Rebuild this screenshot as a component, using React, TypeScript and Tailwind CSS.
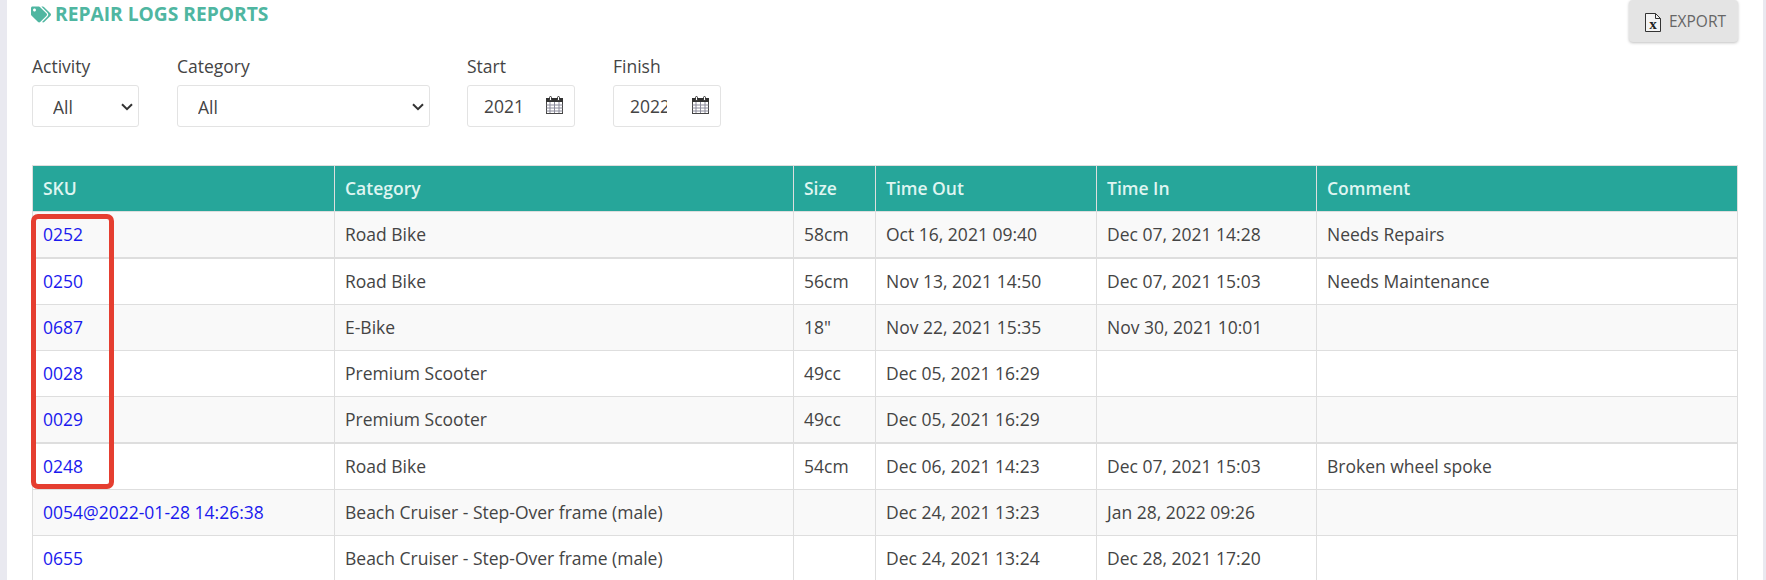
import { FaTags } from 'react-icons/fa';

const ROWS = [
  { sku: '0252', category: 'Road Bike', size: '58cm', out: 'Oct 16, 2021 09:40', in: 'Dec 07, 2021 14:28', comment: 'Needs Repairs', thick: true },
  { sku: '0250', category: 'Road Bike', size: '56cm', out: 'Nov 13, 2021 14:50', in: 'Dec 07, 2021 15:03', comment: 'Needs Maintenance', tall: true },
  { sku: '0687', category: 'E-Bike', size: '18"', out: 'Nov 22, 2021 15:35', in: 'Nov 30, 2021 10:01', comment: '' },
  { sku: '0028', category: 'Premium Scooter', size: '49cc', out: 'Dec 05, 2021 16:29', in: '', comment: '' },
  { sku: '0029', category: 'Premium Scooter', size: '49cc', out: 'Dec 05, 2021 16:29', in: '', comment: '', thick: true },
  { sku: '0248', category: 'Road Bike', size: '54cm', out: 'Dec 06, 2021 14:23', in: 'Dec 07, 2021 15:03', comment: 'Broken wheel spoke', tall: true },
  { sku: '0054@2022-01-28 14:26:38', category: 'Beach Cruiser - Step-Over frame (male)', size: '', out: 'Dec 24, 2021 13:23', in: 'Jan 28, 2022 09:26', comment: '' },
  { sku: '0655', category: 'Beach Cruiser - Step-Over frame (male)', size: '', out: 'Dec 24, 2021 13:24', in: 'Dec 28, 2021 17:20', comment: '' },
];

const HEADERS = ['SKU', 'Category', 'Size', 'Time Out', 'Time In', 'Comment'];

function CalendarIcon() {
  return (
    <svg width="17" height="18" viewBox="0 0 17 18" className="shrink-0">
      <rect x="0.5" y="2.5" width="16" height="15" fill="#fff" stroke="#444" />
      <rect x="0" y="2" width="17" height="4" fill="#333" />
      <path d="M0.5 9h16M0.5 12h16M0.5 15h16M4 6v11M8.5 6v11M13 6v11" stroke="#8a8a9a" strokeWidth="1" fill="none" />
      <rect x="3.5" y="0.5" width="2" height="4" rx="1" fill="#fff" stroke="#333" />
      <rect x="11.5" y="0.5" width="2" height="4" rx="1" fill="#fff" stroke="#333" />
    </svg>
  );
}

function ExcelIcon() {
  return (
    <svg width="16" height="19" viewBox="0 0 16 19" className="shrink-0">
      <path d="M0.5 0.5H10.5L15.5 5.5V18.5H0.5Z" fill="#f4f4f4" stroke="#333" />
      <path d="M10.5 0.5V5.5H15.5" fill="none" stroke="#333" />
      <text x="8" y="16" textAnchor="middle" fontSize="15" fontWeight="700" fontFamily="'Liberation Serif', serif" fill="#222">x</text>
    </svg>
  );
}

function DateField({ label, value, className }: { label: string; value: string; className: string }) {
  return (
    <div className={className}>
      <label className="block text-[17.5px] leading-[22px] text-[#444]">{label}</label>
      <div className="mt-2 flex h-[42px] w-[108px] items-center rounded-[3px] border border-[#e3e3e3] bg-white pl-[16px] pr-[11px]">
        <input
          readOnly
          value={value}
          className="w-[37px] bg-transparent text-[17.5px] text-[#444] outline-none"
        />
        <span className="ml-auto -mt-[3px]">
          <CalendarIcon />
        </span>
      </div>
    </div>
  );
}

function SelectField({ label, width, className }: { label: string; width: string; className: string }) {
  return (
    <div className={className}>
      <label className="block text-[17.5px] leading-[22px] text-[#444]">{label}</label>
      <div className={`relative mt-2 ${width}`}>
        <select className="block h-[42px] w-full appearance-none rounded-[3px] border border-[#e3e3e3] bg-white pt-[3px] pl-[20px] text-[17.5px] text-[#444] outline-none">
          <option>All</option>
        </select>
        {/* chevron */}
        <svg width="12" height="8" viewBox="0 0 12 8" className="pointer-events-none absolute right-[6px] top-[18px]">
          <path d="M1 1.2L6 6.2L11 1.2" fill="none" stroke="#333" strokeWidth="2" />
        </svg>
      </div>
    </div>
  );
}

export default function App() {
  return (
    <div className="relative h-[580px] overflow-hidden bg-white font-['Open_Sans',sans-serif] text-[#444]">
      <div className="flex h-full">
        <div className="w-[7px] shrink-0 bg-[#e9e9f0]" />

        <div className="min-w-0 flex-1 pl-[25px] pr-[26px]">
          {/* Heading + export */}
          <div className="flex h-[42px] items-start justify-between">
            <h2 className="-ml-px flex items-center gap-[4px] text-[19.2px] leading-[28px] font-bold uppercase text-[#4fb6a1]">
              <FaTags className="h-[17px] w-[20px]" />
              Repair Logs Reports
            </h2>
            <button className="-mr-px flex h-[42px] w-[109px] items-center justify-center gap-[8px] rounded-[4px] bg-[#e4e4e4] pt-[2px] pl-[4px] text-[15.5px] text-[#666] shadow-[0_1px_3px_rgba(0,0,0,0.25)]">
              <ExcelIcon />
              EXPORT
            </button>
          </div>

          {/* Filters */}
          <div className="mt-[13px] flex">
            <SelectField label="Activity" width="w-[107px]" className="mr-[38px]" />
            <SelectField label="Category" width="w-[253px]" className="mr-[37px]" />
            <DateField label="Start" value="2021-10-16" className="mr-[38px]" />
            <DateField label="Finish" value="2022-01-28" className="" />
          </div>

          {/* Table */}
          <table className="mt-[38px] w-[1705px] table-fixed border-collapse text-[17.5px]">
            <colgroup>
              <col className="w-[302px]" />
              <col className="w-[459px]" />
              <col className="w-[82px]" />
              <col className="w-[221px]" />
              <col className="w-[220px]" />
              <col className="w-[421px]" />
            </colgroup>
            <thead>
              <tr className="h-[46px] bg-[#26a69a]">
                {HEADERS.map((h) => (
                  <th key={h} className="border border-[#dedede] px-[10px] text-left font-semibold text-[#dff5f1]">
                    {h}
                  </th>
                ))}
              </tr>
            </thead>
            <tbody>
              {ROWS.map((row, i) => (
                <tr
                  key={row.sku}
                  className={`${row.tall ? 'h-[47px]' : 'h-[46px]'} ${i % 2 === 0 ? 'bg-[#f9f9f9]' : 'bg-white'}`}
                >
                  <td className={`border border-[#dedede] px-[10px] ${row.thick ? 'border-b-2' : ''}`}>
                    <a className="text-[#1a1aee]">{row.sku}</a>
                  </td>
                  {[row.category, row.size, row.out, row.in, row.comment].map((val, j) => (
                    <td key={j} className={`border border-[#dedede] px-[10px] ${row.thick ? 'border-b-2' : ''}`}>
                      {val}
                    </td>
                  ))}
                </tr>
              ))}
            </tbody>
          </table>
        </div>

        <div className="w-[3px] shrink-0 bg-[#e9e9f0]" />
      </div>

      {/* Red annotation box */}
      <div className="absolute left-[31px] top-[214px] h-[275px] w-[83px] rounded-[7px] border-[5px] border-[#e53e30]" />
    </div>
  );
}
